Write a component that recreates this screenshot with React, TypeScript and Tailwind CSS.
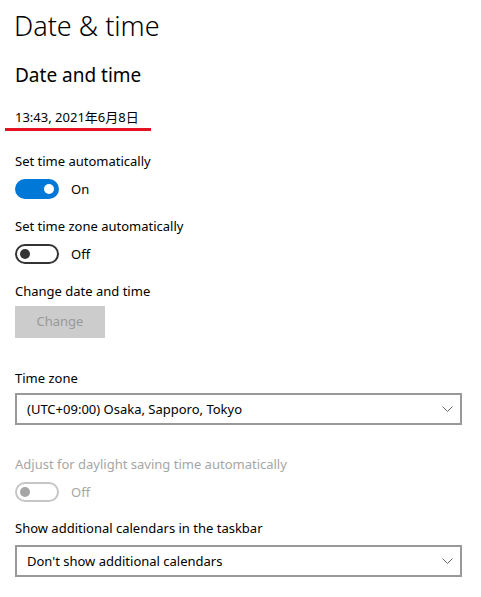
const font = { fontFamily: "'Noto Sans', 'Noto Sans CJK JP', sans-serif" }

function Chevron() {
  return (
    <svg width="11" height="6" viewBox="0 0 11 6" fill="none" className="shrink-0">
      <path d="M0.5 0.5 L5.5 5.5 L10.5 0.5" stroke="#666666" strokeWidth="1" />
    </svg>
  )
}

function Toggle({ on, disabled }: { on?: boolean; disabled?: boolean }) {
  if (on) {
    return (
      <div className="flex h-[20px] w-[44px] items-center justify-end rounded-full bg-[#0078d7] pr-[5px]">
        <div className="h-[10px] w-[10px] rounded-full bg-white" />
      </div>
    )
  }
  return (
    <div
      className={`flex h-[20px] w-[44px] items-center rounded-full border-2 pl-[3px] ${
        disabled ? 'border-[#c6c6c6]' : 'border-[#333333]'
      }`}
    >
      <div className={`h-[10px] w-[10px] rounded-full ${disabled ? 'bg-[#a6a6a6]' : 'bg-[#333333]'}`} />
    </div>
  )
}

function ToggleRow({ label, on, disabled }: { label: string; on?: boolean; disabled?: boolean }) {
  const color = disabled ? 'text-[#a6a6a6]' : 'text-black'
  return (
    <div className="flex flex-col">
      <p className={`h-[20px] text-[13px] leading-[20px] ${color}`}>{label}</p>
      <div className="mt-[8px] flex items-center gap-[12px]">
        <Toggle on={on} disabled={disabled} />
        <span className={`text-[13px] leading-[20px] ${color}`}>{on ? 'On' : 'Off'}</span>
      </div>
    </div>
  )
}

function Select({ value }: { value: string }) {
  return (
    <div className="flex h-[32px] w-[447px] items-center justify-between border-2 border-[#999999] pl-[10px] pr-[7px]">
      <span className="text-[13px] leading-[20px] text-black">{value}</span>
      <Chevron />
    </div>
  )
}

export default function App() {
  return (
    <div className="h-[597px] w-[481px] overflow-hidden bg-white pl-[15px]" style={font}>
      <h1 className="-ml-[1px] pt-[6px] text-[27px] font-light leading-[40px] text-black">Date &amp; time</h1>
      <h2 className="mt-[15px] text-[19px] leading-[28px] text-black">Date and time</h2>
      <div className="relative mt-[18px]">
        <p className="text-[13px] leading-[20px] text-black">13:43, 2021年6月8日</p>
        <div className="absolute left-[-10px] top-[21px] h-[3px] w-[146px] bg-[#e81123]" />
      </div>
      <div className="mt-[24px] flex flex-col gap-[17px]">
        <ToggleRow label="Set time automatically" on />
        <ToggleRow label="Set time zone automatically" />
      </div>
      <p className="mt-[17px] text-[13px] leading-[20px] text-black">Change date and time</p>
      <div className="mt-[5px] flex h-[32px] w-[90px] items-center justify-center bg-[#cccccc] text-[13px] text-[#999999]">
        Change
      </div>
      <p className="mt-[30px] text-[13px] leading-[20px] text-black">Time zone</p>
      <div className="mt-[5px]">
        <Select value="(UTC+09:00) Osaka, Sapporo, Tokyo" />
      </div>
      <div className="mt-[29px]">
        <ToggleRow label="Adjust for daylight saving time automatically" disabled />
      </div>
      <p className="mt-[16px] text-[13px] leading-[20px] text-black">Show additional calendars in the taskbar</p>
      <div className="mt-[7px]">
        <Select value="Don't show additional calendars" />
      </div>
    </div>
  )
}
